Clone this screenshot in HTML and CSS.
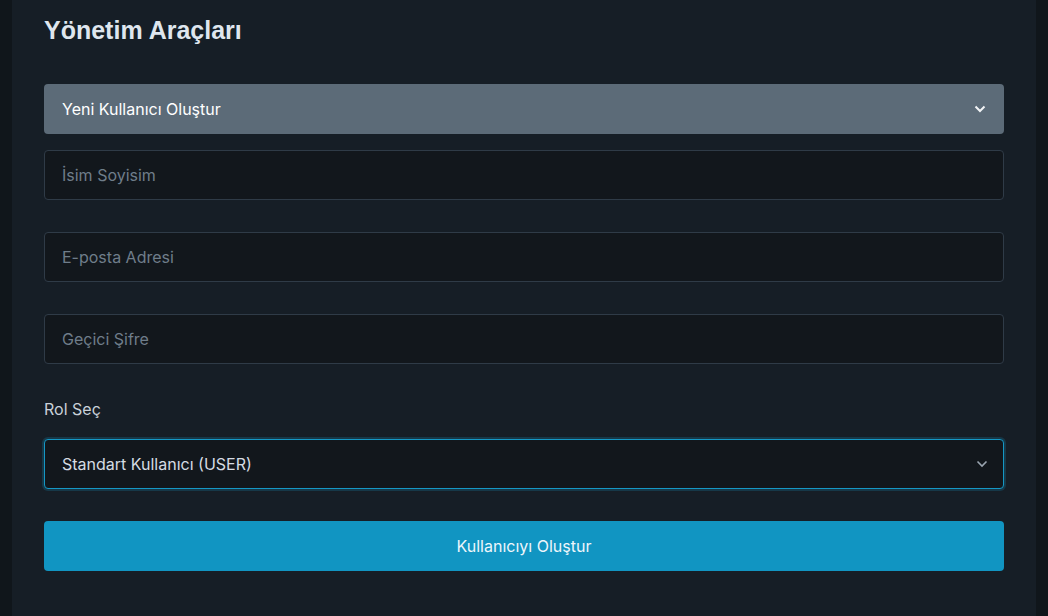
FILE: index.html
```html
<!DOCTYPE html>
<html lang="tr">
<head>
<meta charset="utf-8">
<title>Yönetim Araçları</title>
<link rel="stylesheet" href="styles.css">
</head>
<body>
<main class="panel">
  <h2 class="title">Yönetim Araçları</h2>
  <section class="accordion">
    <button class="accordion-header" type="button">
      <span>Yeni Kullanıcı Oluştur</span>
      <svg class="chev chev-light" width="12" height="8" viewBox="0 0 12 8"><path d="M1.5 1.5 L6 6 L10.5 1.5" fill="none" stroke="currentColor" stroke-width="2"/></svg>
    </button>
    <form class="form">
      <input class="field" type="text" placeholder="İsim Soyisim">
      <input class="field" type="email" placeholder="E-posta Adresi">
      <input class="field" type="password" placeholder="Geçici Şifre">
      <div class="group">
        <label class="label">Rol Seç</label>
        <div class="select focus">
          <span>Standart Kullanıcı (USER)</span>
          <svg class="chev chev-grey" width="12" height="8" viewBox="0 0 12 8"><path d="M1.5 1.5 L6 6 L10.5 1.5" fill="none" stroke="currentColor" stroke-width="1.6"/></svg>
        </div>
      </div>
      <button class="submit" type="button">Kullanıcıyı Oluştur</button>
    </form>
  </section>
</main>
</body>
</html>
```
FILE: styles.css
```css
* { box-sizing: border-box; }
html, body { margin: 0; height: 100%; }
body {
  background: #10161b;
  font-family: Inter, "Noto Sans", sans-serif;
  color: #dfe5eb;
}
.panel {
  margin: 0 12px;
  min-height: 100%;
  background: #161e26;
  padding: 14px 32px 0 32px;
}
.title {
  margin: 0 0 38px 0;
  font-family: "Liberation Sans", Arial, sans-serif;
  font-weight: 700;
  font-size: 25px;
  line-height: 32px;
  color: #dfe6ee;
}
.accordion { display: flex; flex-direction: column; gap: 16px; }
.accordion-header {
  display: flex;
  align-items: center;
  justify-content: space-between;
  height: 50px;
  padding: 0 18px 0 18px;
  border: 0;
  border-radius: 4px;
  background: #5c6b78;
  color: #ffffff;
  font-family: inherit;
  font-weight: 400;
  font-size: 16px;
}
.chev-light { color: #f2f4f6; }
.chev-grey { color: #9aa5b0; }
.form { display: flex; flex-direction: column; gap: 32px; }
.field {
  height: 50px;
  padding: 0 17px;
  background: #12171c;
  border: 1px solid #2f3b47;
  border-radius: 4px;
  color: #dfe5eb;
  font-family: inherit;
  font-size: 16px;
}
.field::placeholder { color: #6f7d8a; }
.group { display: flex; flex-direction: column; gap: 20px; margin-top: 3px; }
.label { font-size: 16px; line-height: 20px; color: #c9d1d9; }
.select {
  display: flex;
  align-items: center;
  justify-content: space-between;
  height: 50px;
  padding: 0 15px 0 17px;
  background: #12171c;
  border: 1px solid #1597c4;
  border-radius: 4px;
  box-shadow: 0 0 0 2px rgba(21, 151, 196, 0.22);
  color: #d5dce3;
  font-size: 16px;
}
.submit {
  height: 50px;
  border: 0;
  border-radius: 4px;
  background: #1195c2;
  color: #eef6fb;
  font-family: inherit;
  font-size: 16px;
}
```
